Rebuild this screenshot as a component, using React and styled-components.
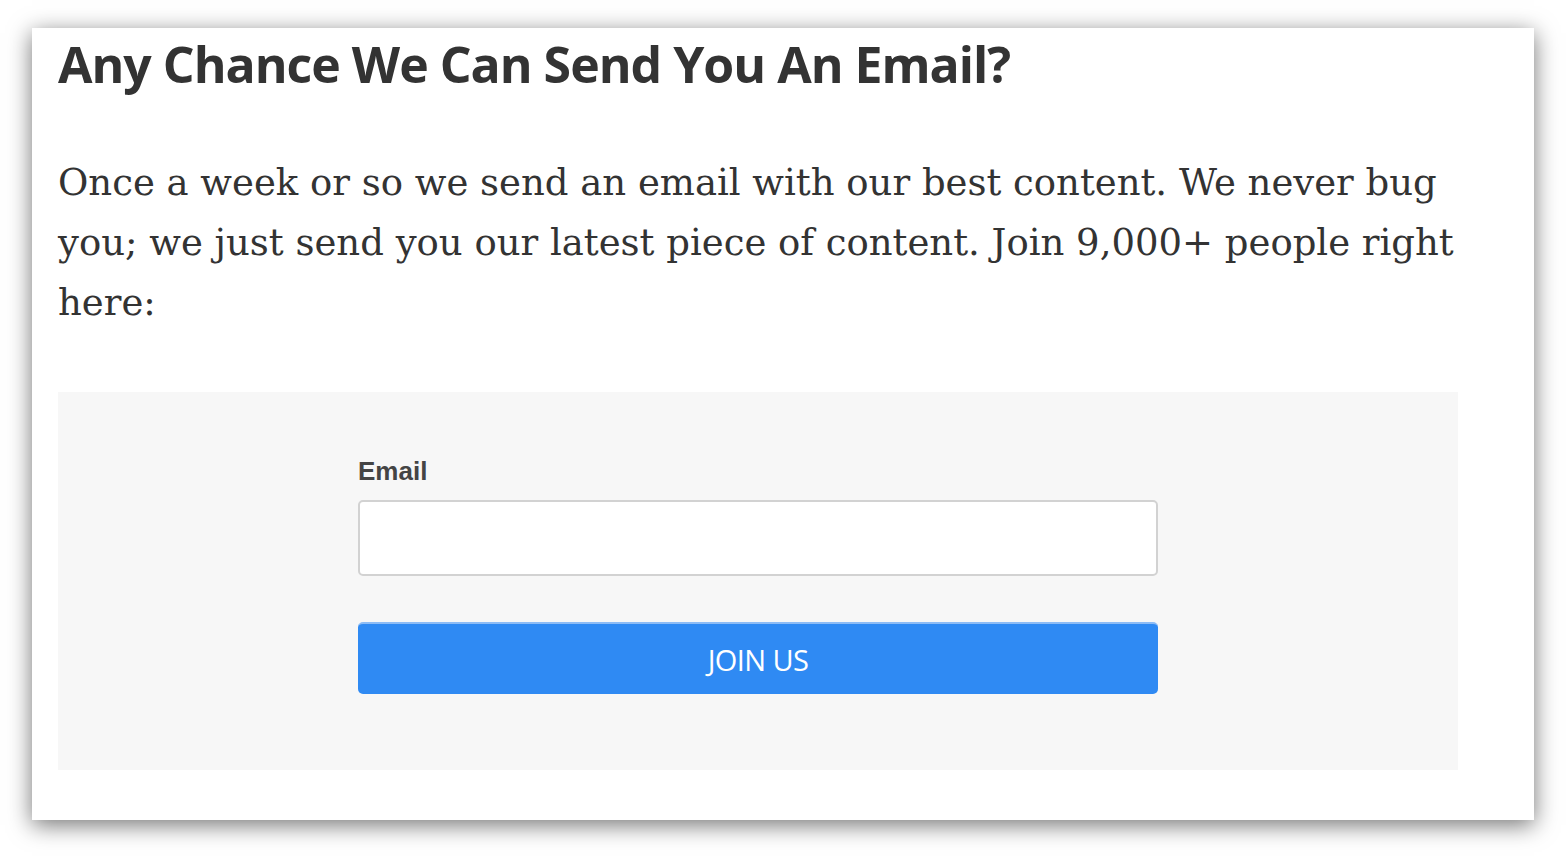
import styled, { createGlobalStyle } from "styled-components";

const GlobalStyle = createGlobalStyle`
  html, body {
    margin: 0;
    padding: 0;
    background: #fff;
  }
  * {
    box-sizing: border-box;
  }
`;

const Page = styled.div`
  width: 1566px;
  height: 856px;
  padding: 28px 32px 36px 32px;
`;

const Card = styled.section`
  width: 1502px;
  height: 792px;
  background: #fff;
  box-shadow: 0 5px 22px rgba(0, 0, 0, 0.55);
  padding: 6px 76px 0 26px;
`;

const Heading = styled.h2`
  margin: 0;
  font-family: "Open Sans", sans-serif;
  font-weight: 700;
  font-size: 50px;
  line-height: 1.2;
  letter-spacing: -1px;
  color: #333;
`;

const Intro = styled.p`
  margin: 59px 0 0;
  font-family: "DejaVu Serif", "Liberation Serif", serif;
  font-size: 37px;
  line-height: 60px;
  color: #333;
`;

const FormBox = styled.div`
  margin-top: 59px;
  background: #f7f7f7;
  padding: 61px 300px 76px;
`;

const Label = styled.label`
  display: block;
  font-family: "Liberation Sans", Arial, sans-serif;
  font-weight: 700;
  font-size: 26px;
  line-height: 36px;
  color: #444;
  margin-bottom: 11px;
`;

const Input = styled.input`
  display: block;
  width: 100%;
  height: 76px;
  border: 2px solid #d2d2d2;
  border-radius: 5px;
  background: #fff;
  outline: none;
`;

const Button = styled.button`
  display: block;
  width: 100%;
  height: 72px;
  margin-top: 46px;
  border: none;
  border-top: 2px solid #8cbcf6;
  border-radius: 5px;
  background: #2f8af3;
  color: #fff;
  font-family: "Open Sans", sans-serif;
  font-size: 29px;
  letter-spacing: -0.6px;
  text-transform: uppercase;
`;

const App = () => {
  return (
    <>
      <GlobalStyle />
      <Page>
        <Card>
          <Heading>Any Chance We Can Send You An Email?</Heading>
          <Intro>
            Once a week or so we send an email with our best content. We never
            bug you; we just send you our latest piece of content. Join 9,000+
            people right here:
          </Intro>
          <FormBox>
            <Label htmlFor="email">Email</Label>
            <Input id="email" type="email" />
            <Button>Join Us</Button>
          </FormBox>
        </Card>
      </Page>
    </>
  );
};

export default App;
